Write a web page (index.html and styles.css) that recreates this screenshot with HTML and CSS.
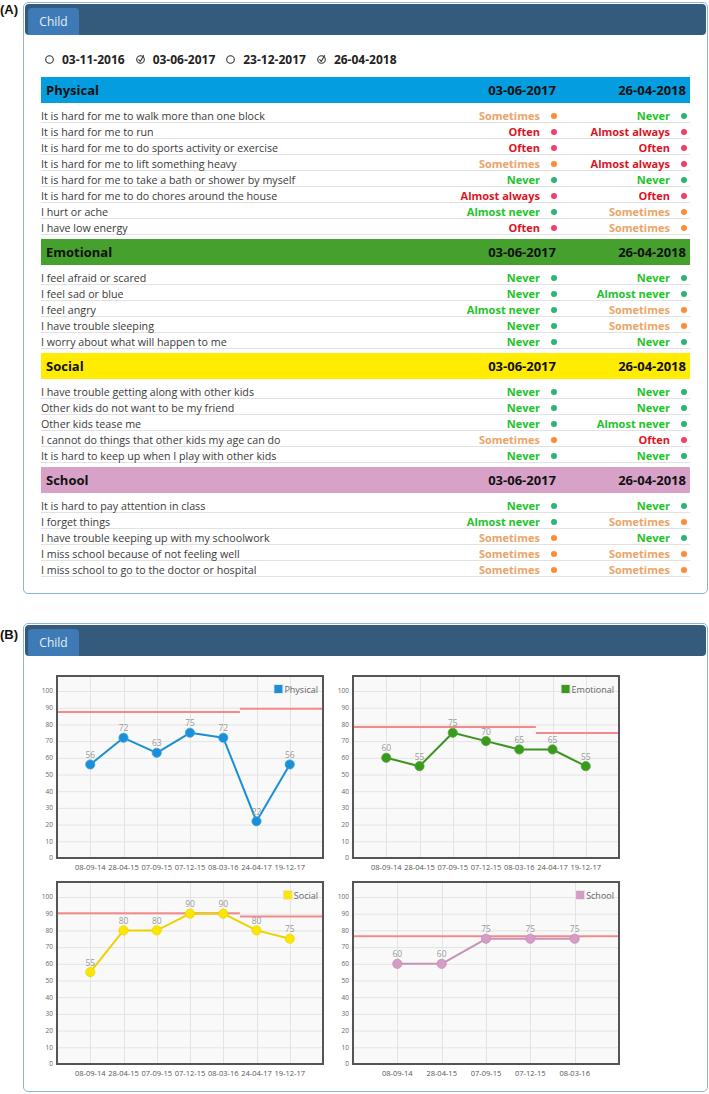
FILE: index.html
```html
<!DOCTYPE html>
<html>
<head>
<meta charset="utf-8">
<title>Child report</title>
<link rel="stylesheet" href="styles.css">
</head>
<body>
<div class="figure">
  <div class="fig-label">(A)</div>
  <div class="panel">
    <div class="bar"><div class="tab">Child</div></div>
    <div class="content-a">
      <div class="dates">
        <span class="date"><svg class="radio" viewBox="0 0 10 10"><circle cx="4.5" cy="5.5" r="3.8"/></svg>03-11-2016</span>
        <span class="date"><svg class="radio" viewBox="0 0 10 10"><circle cx="4.5" cy="5.5" r="3.8"/><path class="tick" d="M2.5 5.3 L4.2 7.5 L7.8 1.2"/></svg>03-06-2017</span>
        <span class="date"><svg class="radio" viewBox="0 0 10 10"><circle cx="4.5" cy="5.5" r="3.8"/></svg>23-12-2017</span>
        <span class="date"><svg class="radio" viewBox="0 0 10 10"><circle cx="4.5" cy="5.5" r="3.8"/><path class="tick" d="M2.5 5.3 L4.2 7.5 L7.8 1.2"/></svg>26-04-2018</span>
      </div>

      <div class="section">
        <div class="sec-head physical"><span class="sec-title">Physical</span><span class="hd">03-06-2017</span><span class="hd">26-04-2018</span></div>
        <div class="row"><span class="q">It is hard for me to walk more than one block</span><span class="v mid">Sometimes<i class="dot"></i></span><span class="v good">Never<i class="dot"></i></span></div>
        <div class="row"><span class="q">It is hard for me to run</span><span class="v bad">Often<i class="dot"></i></span><span class="v bad">Almost always<i class="dot"></i></span></div>
        <div class="row"><span class="q">It is hard for me to do sports activity or exercise</span><span class="v bad">Often<i class="dot"></i></span><span class="v bad">Often<i class="dot"></i></span></div>
        <div class="row"><span class="q">It is hard for me to lift something heavy</span><span class="v mid">Sometimes<i class="dot"></i></span><span class="v bad">Almost always<i class="dot"></i></span></div>
        <div class="row"><span class="q">It is hard for me to take a bath or shower by myself</span><span class="v good">Never<i class="dot"></i></span><span class="v good">Never<i class="dot"></i></span></div>
        <div class="row"><span class="q">It is hard for me to do chores around the house</span><span class="v bad">Almost always<i class="dot"></i></span><span class="v bad">Often<i class="dot"></i></span></div>
        <div class="row"><span class="q">I hurt or ache</span><span class="v good">Almost never<i class="dot"></i></span><span class="v mid">Sometimes<i class="dot"></i></span></div>
        <div class="row"><span class="q">I have low energy</span><span class="v bad">Often<i class="dot"></i></span><span class="v mid">Sometimes<i class="dot"></i></span></div>
      </div>

      <div class="section">
        <div class="sec-head emotional"><span class="sec-title">Emotional</span><span class="hd">03-06-2017</span><span class="hd">26-04-2018</span></div>
        <div class="row"><span class="q">I feel afraid or scared</span><span class="v good">Never<i class="dot"></i></span><span class="v good">Never<i class="dot"></i></span></div>
        <div class="row"><span class="q">I feel sad or blue</span><span class="v good">Never<i class="dot"></i></span><span class="v good">Almost never<i class="dot"></i></span></div>
        <div class="row"><span class="q">I feel angry</span><span class="v good">Almost never<i class="dot"></i></span><span class="v mid">Sometimes<i class="dot"></i></span></div>
        <div class="row"><span class="q">I have trouble sleeping</span><span class="v good">Never<i class="dot"></i></span><span class="v mid">Sometimes<i class="dot"></i></span></div>
        <div class="row"><span class="q">I worry about what will happen to me</span><span class="v good">Never<i class="dot"></i></span><span class="v good">Never<i class="dot"></i></span></div>
      </div>

      <div class="section">
        <div class="sec-head social"><span class="sec-title">Social</span><span class="hd">03-06-2017</span><span class="hd">26-04-2018</span></div>
        <div class="row"><span class="q">I have trouble getting along with other kids</span><span class="v good">Never<i class="dot"></i></span><span class="v good">Never<i class="dot"></i></span></div>
        <div class="row"><span class="q">Other kids do not want to be my friend</span><span class="v good">Never<i class="dot"></i></span><span class="v good">Never<i class="dot"></i></span></div>
        <div class="row"><span class="q">Other kids tease me</span><span class="v good">Never<i class="dot"></i></span><span class="v good">Almost never<i class="dot"></i></span></div>
        <div class="row"><span class="q">I cannot do things that other kids my age can do</span><span class="v mid">Sometimes<i class="dot"></i></span><span class="v bad">Often<i class="dot"></i></span></div>
        <div class="row"><span class="q">It is hard to keep up when I play with other kids</span><span class="v good">Never<i class="dot"></i></span><span class="v good">Never<i class="dot"></i></span></div>
      </div>

      <div class="section">
        <div class="sec-head school"><span class="sec-title">School</span><span class="hd">03-06-2017</span><span class="hd">26-04-2018</span></div>
        <div class="row"><span class="q">It is hard to pay attention in class</span><span class="v good">Never<i class="dot"></i></span><span class="v good">Never<i class="dot"></i></span></div>
        <div class="row"><span class="q">I forget things</span><span class="v good">Almost never<i class="dot"></i></span><span class="v mid">Sometimes<i class="dot"></i></span></div>
        <div class="row"><span class="q">I have trouble keeping up with my schoolwork</span><span class="v mid">Sometimes<i class="dot"></i></span><span class="v good">Never<i class="dot"></i></span></div>
        <div class="row"><span class="q">I miss school because of not feeling well</span><span class="v mid">Sometimes<i class="dot"></i></span><span class="v mid">Sometimes<i class="dot"></i></span></div>
        <div class="row"><span class="q">I miss school to go to the doctor or hospital</span><span class="v mid">Sometimes<i class="dot"></i></span><span class="v mid">Sometimes<i class="dot"></i></span></div>
      </div>
    </div>
  </div>
</div>

<div class="figure figure-b">
  <div class="fig-label label-b">(B)</div>
  <div class="panel">
    <div class="bar"><div class="tab">Child</div></div>
    <div class="content-b">
      <svg class="chart" id="c-phys" viewBox="0 0 296 206"></svg>
      <svg class="chart" id="c-emo" viewBox="0 0 296 206"></svg>
      <svg class="chart" id="c-soc" viewBox="0 0 296 206"></svg>
      <svg class="chart" id="c-sch" viewBox="0 0 296 206"></svg>
    </div>
  </div>
</div>
<script src="script.js"></script>
</body>
</html>
```

FILE: styles.css
```css
* { box-sizing: border-box; }
body {
  margin: 0;
  padding-top: 2px;
  background: #fff;
  font-family: "Open Sans", "Noto Sans", sans-serif;
  color: #333;
}
.figure { display: flex; align-items: flex-start; }
.figure-b { margin-top: 29px; }
.fig-label {
  width: 23px;
  flex: none;
  font: bold 13px/13px "Liberation Sans", Arial, sans-serif;
  color: #111;
  padding-top: 1px;
}
.label-b { padding-top: 5px; }
.panel {
  flex: 1;
  margin-right: 1px;
  border: 1px solid #8db4dc;
  border-radius: 5px;
  padding: 1px;
}
.bar {
  height: 31px;
  background: #345a7c;
  border-radius: 4px;
  display: flex;
  align-items: flex-end;
  padding-left: 3px;
}
.tab {
  width: 51px;
  height: 27px;
  background: #3e7bb6;
  border-radius: 4px 4px 0 0;
  color: #e6eef6;
  font-size: 12px;
  line-height: 27px;
  text-align: center;
}

/* ---------- panel A ---------- */
.content-a { padding: 15px 16px 11px 16px; }
.dates {
  display: flex;
  align-items: center;
  gap: 11px;
  height: 18px;
  margin-left: 4px;
  margin-bottom: 9px;
  font-size: 12px;
  font-weight: bold;
  color: #222;
}
.date { display: flex; align-items: center; gap: 7px; }
.radio { width: 10px; height: 10px; }
.radio circle { fill: none; stroke: #333; stroke-width: 1.1; }
.radio .tick { fill: none; stroke: #333; stroke-width: 1.1; stroke-linejoin: round; }

.section { margin-bottom: 4px; }
.sec-head, .row {
  display: grid;
  grid-template-columns: 1fr 130px 130px;
  align-items: center;
}
.sec-head {
  height: 26px;
  margin-bottom: 4px;
  font-size: 13px;
  font-weight: bold;
  color: #111;
}
.sec-title { padding-left: 5px; }
.hd { text-align: right; padding-right: 4px; }
.physical { background: #049ddf; }
.emotional { background: #45a02e; }
.social { background: #ffec00; }
.school { background: #d8a2c8; }

.row {
  height: 16px;
  border-bottom: 1px solid #e2e2e2;
  font-size: 11px;
  line-height: 15px;
}
.q { color: #3a3a3a; white-space: nowrap; font-size: 10.7px; padding-top: 2px; }
.v {
  display: flex;
  justify-content: flex-end;
  align-items: center;
  font-weight: bold;
}
.dot {
  width: 6px;
  height: 6px;
  border-radius: 50%;
  margin-left: 11px;
  margin-right: 3px;
}
.good { color: #23c32c; }
.good .dot { background: #2db374; }
.mid { color: #eba468; }
.mid .dot { background: #ff8b33; }
.bad { color: #dc1424; }
.bad .dot { background: #f0406a; }

/* ---------- panel B ---------- */
.content-b {
  display: grid;
  grid-template-columns: 296px 296px;
  grid-auto-rows: 206px;
  padding: 15px 0 7px 12px;
}
.chart { width: 296px; height: 206px; display: block; }
.chart .plot-bg { fill: #f9f9f9; }
.chart .grid { stroke: #e4e4e4; stroke-width: 1; }
.chart .frame { fill: none; stroke: #555; stroke-width: 2; }
.chart .ref { stroke: #f38a8a; stroke-width: 2; }
.chart .series { fill: none; stroke-width: 2; stroke-linejoin: round; }
.chart .ylab { font-size: 6.5px; fill: #666; text-anchor: end; }
.chart .xlab { font-size: 7.5px; fill: #555; text-anchor: middle; }
.chart .dlab { font-size: 8.5px; fill: #999; text-anchor: middle; }
.chart .leg { font-size: 9px; fill: #666; text-anchor: end; }
.chart .leg-box { fill: #e6e6e6; }
```

FILE: script.js
```js
(function () {
  var NS = 'http://www.w3.org/2000/svg';
  var X0 = 20, X1 = 286, Y0 = 5, Y1 = 187, K = 1.67;
  var dates7 = ['08-09-14', '28-04-15', '07-09-15', '07-12-15', '08-03-16', '24-04-17', '19-12-17'];
  var charts = [
    { id: 'c-phys', name: 'Physical', line: '#1b8fd4', fill: '#1a90d8', stroke: '#3aa2e0', labels: dates7,
      data: [56, 72, 63, 75, 72, 22, 56], ref: [87.5, 89.3] },
    { id: 'c-emo', name: 'Emotional', line: '#3a951f', fill: '#399a1d', stroke: '#4ea834', labels: dates7,
      data: [60, 55, 75, 70, 65, 65, 55], ref: [78.4, 74.9] },
    { id: 'c-soc', name: 'Social', line: '#ecd300', fill: '#fce600', stroke: '#eed500', labels: dates7,
      data: [55, 80, 80, 90, 90, 80, 75], ref: [90.2, 88.3] },
    { id: 'c-sch', name: 'School', line: '#c892bb', fill: '#d39dc6', stroke: '#c58cb8', labels: ['08-09-14', '28-04-15', '07-09-15', '07-12-15', '08-03-16'],
      data: [60, 60, 75, 75, 75], ref: [76.5] }
  ];

  function el(parent, tag, attrs, text) {
    var e = document.createElementNS(NS, tag);
    for (var k in attrs) e.setAttribute(k, attrs[k]);
    if (text !== undefined) e.textContent = text;
    parent.appendChild(e);
    return e;
  }
  function y(v) { return Y1 - v * K; }

  charts.forEach(function (c) {
    var svg = document.getElementById(c.id);
    var n = c.data.length;
    function x(i) { return X0 + (X1 - X0) * (i + 1) / (n + 1); }

    el(svg, 'rect', { 'class': 'plot-bg', x: X0, y: Y0, width: X1 - X0, height: Y1 - Y0 });
    for (var v = 10; v <= 100; v += 10) {
      el(svg, 'line', { 'class': 'grid', x1: X0, x2: X1, y1: y(v) + 0.5, y2: y(v) + 0.5 });
    }
    for (var i = 0; i < n; i++) {
      el(svg, 'line', { 'class': 'grid', x1: Math.round(x(i)) + 0.5, x2: Math.round(x(i)) + 0.5, y1: Y0, y2: Y1 });
    }
    for (var v2 = 0; v2 <= 100; v2 += 10) {
      el(svg, 'text', { 'class': 'ylab', x: 16, y: y(v2) + 2.3 }, String(v2));
    }

    if (c.ref.length === 1) {
      el(svg, 'line', { 'class': 'ref', x1: X0, x2: X1, y1: y(c.ref[0]), y2: y(c.ref[0]) });
    } else {
      var sx = x(4.5);
      el(svg, 'line', { 'class': 'ref', x1: X0, x2: sx, y1: y(c.ref[0]), y2: y(c.ref[0]) });
      el(svg, 'line', { 'class': 'ref', x1: sx, x2: X1, y1: y(c.ref[1]), y2: y(c.ref[1]) });
    }

    var pts = c.data.map(function (d, i) { return x(i).toFixed(1) + ',' + y(d).toFixed(1); }).join(' ');
    el(svg, 'polyline', { 'class': 'series', points: pts, stroke: c.line });
    c.data.forEach(function (d, i) {
      el(svg, 'text', { 'class': 'dlab', x: x(i), y: y(d) - 6.5 }, String(d));
    });
    c.data.forEach(function (d, i) {
      el(svg, 'circle', { cx: x(i), cy: y(d), r: 4.6, fill: c.fill, stroke: c.stroke, 'stroke-width': 0.8 });
    });

    var lt = el(svg, 'text', { 'class': 'leg', x: 281, y: 21.5 }, c.name);
    var w = lt.getComputedTextLength();
    var bx = 281 - w - 10;
    el(svg, 'rect', { 'class': 'leg-box', x: bx - 1, y: 13, width: 10, height: 10 });
    el(svg, 'rect', { x: bx, y: 14, width: 8, height: 8, fill: c.fill });

    el(svg, 'rect', { 'class': 'frame', x: X0, y: Y0, width: X1 - X0, height: Y1 - Y0 });

    c.labels.forEach(function (t, i) {
      el(svg, 'text', { 'class': 'xlab', x: x(i), y: 198.5 }, t);
    });
  });
})();
```
